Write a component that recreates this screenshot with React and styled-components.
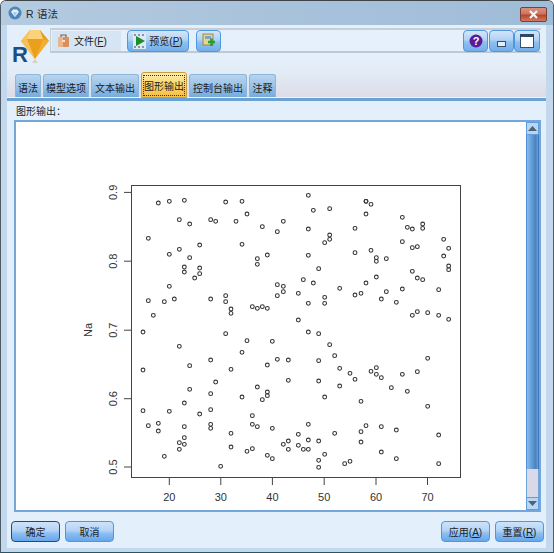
import React from 'react';
import styled, { createGlobalStyle } from 'styled-components';

const GlobalStyle = createGlobalStyle`
  html, body { margin: 0; padding: 0; background: #fff; }
  body { font-family: "Liberation Sans", "Noto Sans CJK SC", sans-serif; font-size: 10px; color: #222; }
`;

const Window = styled.div`
  box-sizing: border-box;
  width: 554px;
  height: 553px;
  display: flex;
  flex-direction: column;
  overflow: hidden;
  border: 1px solid #4d5c66;
  border-top-color: #3f4448;
  border-bottom-color: #2a5560;
  border-radius: 6px 6px 0 0;
  background: #c3d8ed;
`;

const TitleBar = styled.div`
  box-sizing: border-box;
  height: 24px;
  flex: none;
  display: flex;
  align-items: center;
  gap: 4px;
  padding: 0 6px 0 7px;
  background: linear-gradient(90deg, #b4cbe0 0%, #a9c3dc 45%, #9fbcd8 100%);
  font-size: 11px;
`;

const TitleText = styled.span`
  color: #1f2a33;
  font-size: 10.5px;
  letter-spacing: 0.2px;
`;

const CloseButton = styled.div`
  box-sizing: border-box;
  margin-left: auto;
  margin-top: 2px;
  width: 27px;
  height: 15px;
  display: flex;
  align-items: center;
  justify-content: center;
  border: 1px solid #7a4034;
  border-radius: 2px;
  background: linear-gradient(180deg, #d9907e 0%, #cf7560 45%, #b8442c 55%, #d27a62 100%);
`;

const Body = styled.div`
  flex: 1;
  display: flex;
  flex-direction: column;
  margin: 0 7px 4px 6px;
  background: #e3effb;
`;

const TopRow = styled.div`
  box-sizing: border-box;
  height: 30px;
  flex: none;
  display: flex;
  align-items: flex-start;
  padding: 3px 5px 0 5px;
`;

const Logo = styled.svg`
  flex: none;
  width: 38px;
  height: 38px;
  position: relative;
  z-index: 2;
`;

const Toolbar = styled.div`
  box-sizing: border-box;
  flex: 1;
  height: 25px;
  display: flex;
  align-items: center;
  padding: 0 1px 0 1px;
  border-top: 2px solid #c8ced6;
  border-bottom: 2px solid #c2c8d0;
  border-left: 1px solid #c8ced6;
  background: #e5f0fc;
`;

const FileMenu = styled.div`
  width: 69px;
  height: 20px;
  flex: none;
  display: flex;
  align-items: center;
  gap: 4px;
  padding-left: 5px;
  box-sizing: border-box;
  background: #d5e5f4;
`;

const ToolButton = styled.div`
  box-sizing: border-box;
  flex: none;
  width: ${p => p.$w}px;
  height: 22px;
  margin-left: ${p => p.$gap || 0}px;
  display: flex;
  align-items: center;
  justify-content: center;
  gap: 3px;
  border: 1px solid #4f98e0;
  border-radius: 4px;
  background: linear-gradient(180deg, #d3e6fa 0%, #b0d2f4 45%, #8fc0f0 55%, #73aeea 100%);
`;

const ToolSpacer = styled.div`
  flex: 1;
`;

const TabArea = styled.div`
  height: 42px;
  flex: none;
  display: flex;
  align-items: flex-end;
  gap: 2px;
  padding-left: 8px;
  background: linear-gradient(180deg, #e4f0fc 0%, #e2ebf6 45%, #dcdce6 100%);
`;

const Tab = styled.div`
  box-sizing: border-box;
  flex: none;
  width: ${p => p.$w}px;
  height: ${p => (p.$active ? 26 : 23)}px;
  margin-bottom: ${p => (p.$active ? -1 : 0)}px;
  display: flex;
  align-items: center;
  justify-content: center;
  padding-top: ${p => (p.$active ? 0 : 3)}px;
  border: 1px solid ${p => (p.$active ? '#c99b3c' : '#8db6db')};
  border-bottom: ${p => (p.$active ? '1px solid #c99b3c' : 'none')};
  border-radius: 3px 3px 0 0;
  position: relative;
  z-index: ${p => (p.$active ? 1 : 0)};
  background: ${p =>
    p.$active
      ? 'linear-gradient(180deg, #fdeeb4 0%, #fbd970 40%, #f5bf45 100%)'
      : 'linear-gradient(180deg, #b8d4ee 0%, #9dc4e8 45%, #74abde 100%)'};
  color: #1d1d1d;
  white-space: nowrap;
`;

const FocusBox = styled.span`
  padding: 2px 0;
  outline: 1px dotted #3a3020;
  outline-offset: 0;
`;

const TabStrip = styled.div`
  height: 4px;
  flex: none;
  border-top: 1px solid #eef4fb;
  box-sizing: border-box;
  background: #6ba1d3;
`;

const FieldLabel = styled.div`
  box-sizing: border-box;
  height: 19px;
  flex: none;
  display: flex;
  align-items: center;
  padding-left: 9px;
  color: #222;
`;

const Panel = styled.div`
  box-sizing: border-box;
  height: 392px;
  flex: none;
  margin: 0 5px 0 7px;
  display: flex;
  border: 2px solid #74a6d8;
  background: #fff;
`;

const PlotArea = styled.div`
  flex: 1;
  min-width: 0;
`;

const ScrollBar = styled.div`
  flex: none;
  width: 13px;
  display: flex;
  flex-direction: column;
`;

const ScrollArrow = styled.div`
  box-sizing: border-box;
  height: 13px;
  flex: none;
  display: flex;
  align-items: center;
  justify-content: center;
  border: 1px solid #5f9ddd;
  background: #b5d6f7;
`;

const ScrollThumb = styled.div`
  flex: 1;
  border-left: 1px solid #4f8fd4;
  border-right: 1px solid #3f78b8;
  background: linear-gradient(90deg, #88bbee 0%, #5e98d2 50%, #4a82bc 80%, #6aa2dc 100%);
`;

const ScrollTrack = styled.div`
  height: 28px;
  flex: none;
  box-sizing: border-box;
  border: 1px solid #6ea6dc;
  border-width: 0 1px;
  background: #d9d9e7;
`;

const Footer = styled.div`
  box-sizing: border-box;
  flex: 1;
  display: flex;
  align-items: flex-start;
  gap: 5px;
  padding: 9px 2px 0 4px;
`;

const ActionButton = styled.div`
  box-sizing: border-box;
  width: 49px;
  height: 21px;
  margin-left: ${p => (p.$push ? 'auto' : '0')};
  display: flex;
  align-items: center;
  justify-content: center;
  border: 1px solid ${p => (p.$primary ? '#36495c' : '#4f98e0')};
  border-radius: 4px;
  background: linear-gradient(180deg, #cfe3f9 0%, #b2d3f5 45%, #8cbef1 60%, #66a6ec 100%);
  color: #1d1d1d;
  white-space: nowrap;
`;

const raw = (ox, oy, pts) => pts.map(([x, y]) => [ox + x / 3, oy + y / 3]);

const POINTS = [
  ...raw(75, 175, [
    [250, 84], [283, 79], [328, 76], [452, 81], [501, 79], [516, 117], [313, 134], [344, 147], [407, 134],
    [422, 139], [483, 139], [562, 155], [220, 190], [374, 210], [501, 208], [313, 223], [283, 238], [344, 248],
    [547, 251], [577, 240], [547, 268], [328, 276], [374, 279], [328, 291], [374, 296], [359, 309], [283, 334],
    [452, 362], [220, 377], [268, 380], [298, 372], [407, 372], [452, 380], [468, 402], [468, 415], [532, 395],
    [547, 400], [562, 395], [577, 400], [235, 421], [204, 471], [452, 476],
  ]),
  ...raw(270, 175, [
    [115, 61], [288, 79], [288, 79], [303, 88], [130, 106], [179, 101], [288, 117], [397, 127], [40, 139], [22, 170],
    [115, 162], [255, 160], [412, 157], [427, 162], [458, 147], [458, 160], [179, 180], [179, 193], [164, 203],
    [397, 200], [521, 193], [427, 218], [442, 215], [536, 220], [255, 233], [303, 226], [115, 241], [319, 248],
    [319, 259], [349, 251], [521, 243], [536, 273], [536, 284], [146, 281], [427, 289], [442, 309], [458, 314],
    [100, 314], [130, 324], [22, 329], [40, 334], [40, 350], [22, 362], [85, 355], [319, 306], [288, 324],
    [209, 340], [397, 342], [506, 344], [349, 350], [273, 355], [255, 360], [164, 367], [164, 385], [115, 385],
    [334, 372], [379, 382], [427, 421], [442, 410], [473, 413], [506, 421], [536, 433], [85, 435], [115, 471],
    [146, 476],
  ]),
  ...raw(75, 330, [
    [516, 32], [592, 34], [313, 49], [501, 67], [407, 90], [344, 107], [577, 105], [204, 120], [468, 118],
    [422, 156], [547, 171], [344, 178], [577, 186], [577, 197], [407, 191], [501, 201], [562, 209], [328, 219],
    [204, 242], [283, 244], [407, 239], [374, 252], [532, 257], [250, 280], [407, 283], [532, 283], [547, 290],
    [220, 287], [328, 290], [407, 295], [592, 295], [250, 303], [468, 310], [328, 323], [313, 338], [328, 343],
    [313, 358], [468, 351], [532, 356], [516, 364], [268, 379], [577, 376], [592, 386], [437, 409],
  ]),
  ...raw(270, 330, [
    [179, 44], [194, 77], [22, 88], [55, 90], [146, 92], [473, 85], [209, 115], [319, 113], [303, 124], [319, 133],
    [334, 143], [240, 130], [397, 133], [442, 125], [255, 148], [55, 151], [146, 153], [209, 168], [364, 173],
    [412, 184], [164, 201], [273, 214], [473, 229], [115, 283], [288, 287], [334, 290], [379, 300], [273, 305],
    [194, 310], [85, 313], [506, 315], [55, 333], [115, 330], [146, 333], [40, 343], [55, 358], [85, 346],
    [100, 358], [115, 358], [273, 336], [334, 366], [164, 373], [146, 391], [379, 386], [240, 394], [224, 401],
    [146, 412], [506, 401],
  ]),
];

const X_TICKS = [[20, 169.3], [30, 220.8], [40, 272.4], [50, 324.2], [60, 376], [70, 427.5]];
const Y_TICKS = [['0.9', 192.4], ['0.8', 261.2], ['0.7', 330.2], ['0.6', 398.7], ['0.5', 467]];

const ScatterPlot = () => (
  <svg width="509" height="388" viewBox="16 122 509 388" style={{ display: 'block' }}>
    <rect x="131.5" y="185.5" width="329" height="292" fill="none" stroke="#444" strokeWidth="1" />
    {X_TICKS.map(([label, x]) => (
      <g key={label}>
        <line x1={x} x2={x} y1="478" y2="485" stroke="#444" />
        <text x={x} y="501" textAnchor="middle" fontSize="11" fill="#333" fontFamily="Liberation Sans">
          {label}
        </text>
      </g>
    ))}
    {Y_TICKS.map(([label, y]) => (
      <g key={label}>
        <line x1="124" x2="131" y1={y} y2={y} stroke="#444" />
        <text
          transform={`translate(117 ${y}) rotate(-90)`}
          textAnchor="middle"
          fontSize="11"
          fill="#333"
          fontFamily="Liberation Sans"
        >
          {label}
        </text>
      </g>
    ))}
    <text
      transform="translate(92 330) rotate(-90)"
      textAnchor="middle"
      fontSize="11"
      fill="#333"
      fontFamily="Liberation Sans"
    >
      Na
    </text>
    {POINTS.map(([x, y], i) => (
      <circle key={i} cx={x} cy={y} r="1.9" fill="none" stroke="#333" strokeWidth="1.05" />
    ))}
  </svg>
);

const GemLogo = () => (
  <Logo viewBox="0 0 38 38">
    <polygon points="9,13 18,2 28,2 37,13 23,31" fill="#f2ae2e" />
    <polygon points="18,2 28,2 31,11 15,11" fill="#fbd27a" />
    <polygon points="9,13 18,2 15,11" fill="#f8c565" />
    <polygon points="37,13 28,2 31,11" fill="#e89f22" />
    <polygon points="15,11 31,11 23,31" fill="#eaa01c" />
    <polygon points="9,13 15,11 23,31" fill="#f7bf55" />
    <polygon points="23,31 20,35 26,35" fill="#d8d2c4" />
    <text x="0" y="34" fontSize="22" fontWeight="700" fill="#1c4f80" fontFamily="Liberation Sans">
      R
    </text>
  </Logo>
);

const TitleIcon = () => (
  <svg width="14" height="14" viewBox="0 0 14 14">
    <circle cx="7" cy="7" r="6.5" fill="#4d86b8" />
    <polygon points="3,6 5,3.5 9,3.5 11,6 7,11" fill="#e8f1f8" />
    <polygon points="5,6 9,6 7,11" fill="#a9cbe4" />
  </svg>
);

const CloseIcon = () => (
  <svg width="11" height="9" viewBox="0 0 11 9">
    <path d="M2 1 L9 8 M9 1 L2 8" stroke="#f4f4f4" strokeWidth="2.2" />
  </svg>
);

const CaseIcon = () => (
  <svg width="13" height="15" viewBox="0 0 13 15">
    <path d="M4 4 V2 H9 V4" fill="none" stroke="#8a5a38" strokeWidth="1.2" />
    <rect x="1" y="4" width="11" height="10" rx="1" fill="#d8905e" />
    <rect x="1" y="4" width="5" height="10" fill="#eab48c" />
    <rect x="5" y="7" width="3" height="2" fill="#f4e2c4" />
  </svg>
);

const PreviewIcon = () => (
  <svg width="13" height="16" viewBox="0 0 13 16">
    <rect x="0" y="0" width="13" height="16" fill="#dfe9f3" />
    <path d="M1 2 H3 M5 2 H7 M9 2 H11 M1 14 H3 M5 14 H7 M9 14 H11" stroke="#6a7a88" strokeWidth="1.6" />
    <polygon points="3,3 12,8 3,13" fill="#1c8c2c" />
  </svg>
);

const AddIcon = () => (
  <svg width="15" height="15" viewBox="0 0 15 15">
    <rect x="2" y="1" width="10" height="11" fill="#e8d48a" stroke="#9a8a50" />
    <rect x="4" y="3" width="6" height="3" fill="#7aa6d0" />
    <path d="M7 9 H14 M10.5 5.5 V13" stroke="#2c9a3c" strokeWidth="2.6" />
  </svg>
);

const HelpIcon = () => (
  <svg width="14" height="14" viewBox="0 0 14 14">
    <circle cx="7" cy="7" r="6.5" fill="#5a1a9a" />
    <text x="7" y="11" textAnchor="middle" fontSize="11" fontWeight="700" fill="#fff" fontFamily="Liberation Sans">
      ?
    </text>
  </svg>
);

const MinimizeIcon = () => (
  <svg width="10" height="8" viewBox="0 0 10 8" style={{ marginTop: 6 }}>
    <rect x="0.5" y="1.5" width="8" height="5" fill="#e4eef8" stroke="#35506c" />
  </svg>
);

const MaximizeIcon = () => (
  <svg width="14" height="14" viewBox="0 0 14 14">
    <rect x="0.5" y="0.5" width="13" height="13" fill="#fff" stroke="#35506c" />
    <rect x="0" y="0" width="14" height="3" fill="#2c4a68" />
  </svg>
);

const Triangle = ({ down }) => (
  <svg width="9" height="5" viewBox="0 0 9 5">
    <polygon points={down ? '0,0 9,0 4.5,5' : '0,5 9,5 4.5,0'} fill="#55606c" />
  </svg>
);

export default function App() {
  return (
    <Window>
      <GlobalStyle />
      <TitleBar>
        <TitleIcon />
        <TitleText>R 语法</TitleText>
        <CloseButton>
          <CloseIcon />
        </CloseButton>
      </TitleBar>
      <Body>
        <TopRow>
          <GemLogo />
          <Toolbar>
            <FileMenu>
              <CaseIcon />
              <span>
                文件(<u>F</u>)
              </span>
            </FileMenu>
            <ToolButton $w={62} $gap={6}>
              <PreviewIcon />
              <span>
                预览(<u>P</u>)
              </span>
            </ToolButton>
            <ToolButton $w={25} $gap={7}>
              <AddIcon />
            </ToolButton>
            <ToolSpacer />
            <ToolButton $w={25}>
              <HelpIcon />
            </ToolButton>
            <ToolButton $w={25} $gap={1}>
              <MinimizeIcon />
            </ToolButton>
            <ToolButton $w={26}>
              <MaximizeIcon />
            </ToolButton>
          </Toolbar>
        </TopRow>
        <TabArea>
          <Tab $w={26}>语法</Tab>
          <Tab $w={46}>模型选项</Tab>
          <Tab $w={48}>文本输出</Tab>
          <Tab $w={46} $active>
            <FocusBox>图形输出</FocusBox>
          </Tab>
          <Tab $w={58}>控制台输出</Tab>
          <Tab $w={27}>注释</Tab>
        </TabArea>
        <TabStrip />
        <FieldLabel>图形输出：</FieldLabel>
        <Panel>
          <PlotArea>
            <ScatterPlot />
          </PlotArea>
          <ScrollBar>
            <ScrollArrow>
              <Triangle />
            </ScrollArrow>
            <ScrollThumb />
            <ScrollTrack />
            <ScrollArrow>
              <Triangle down />
            </ScrollArrow>
          </ScrollBar>
        </Panel>
        <Footer>
          <ActionButton $primary>确定</ActionButton>
          <ActionButton>取消</ActionButton>
          <ActionButton $push>
            <span>
              应用(<u>A</u>)
            </span>
          </ActionButton>
          <ActionButton>
            <span>
              重置(<u>R</u>)
            </span>
          </ActionButton>
        </Footer>
      </Body>
    </Window>
  );
}
